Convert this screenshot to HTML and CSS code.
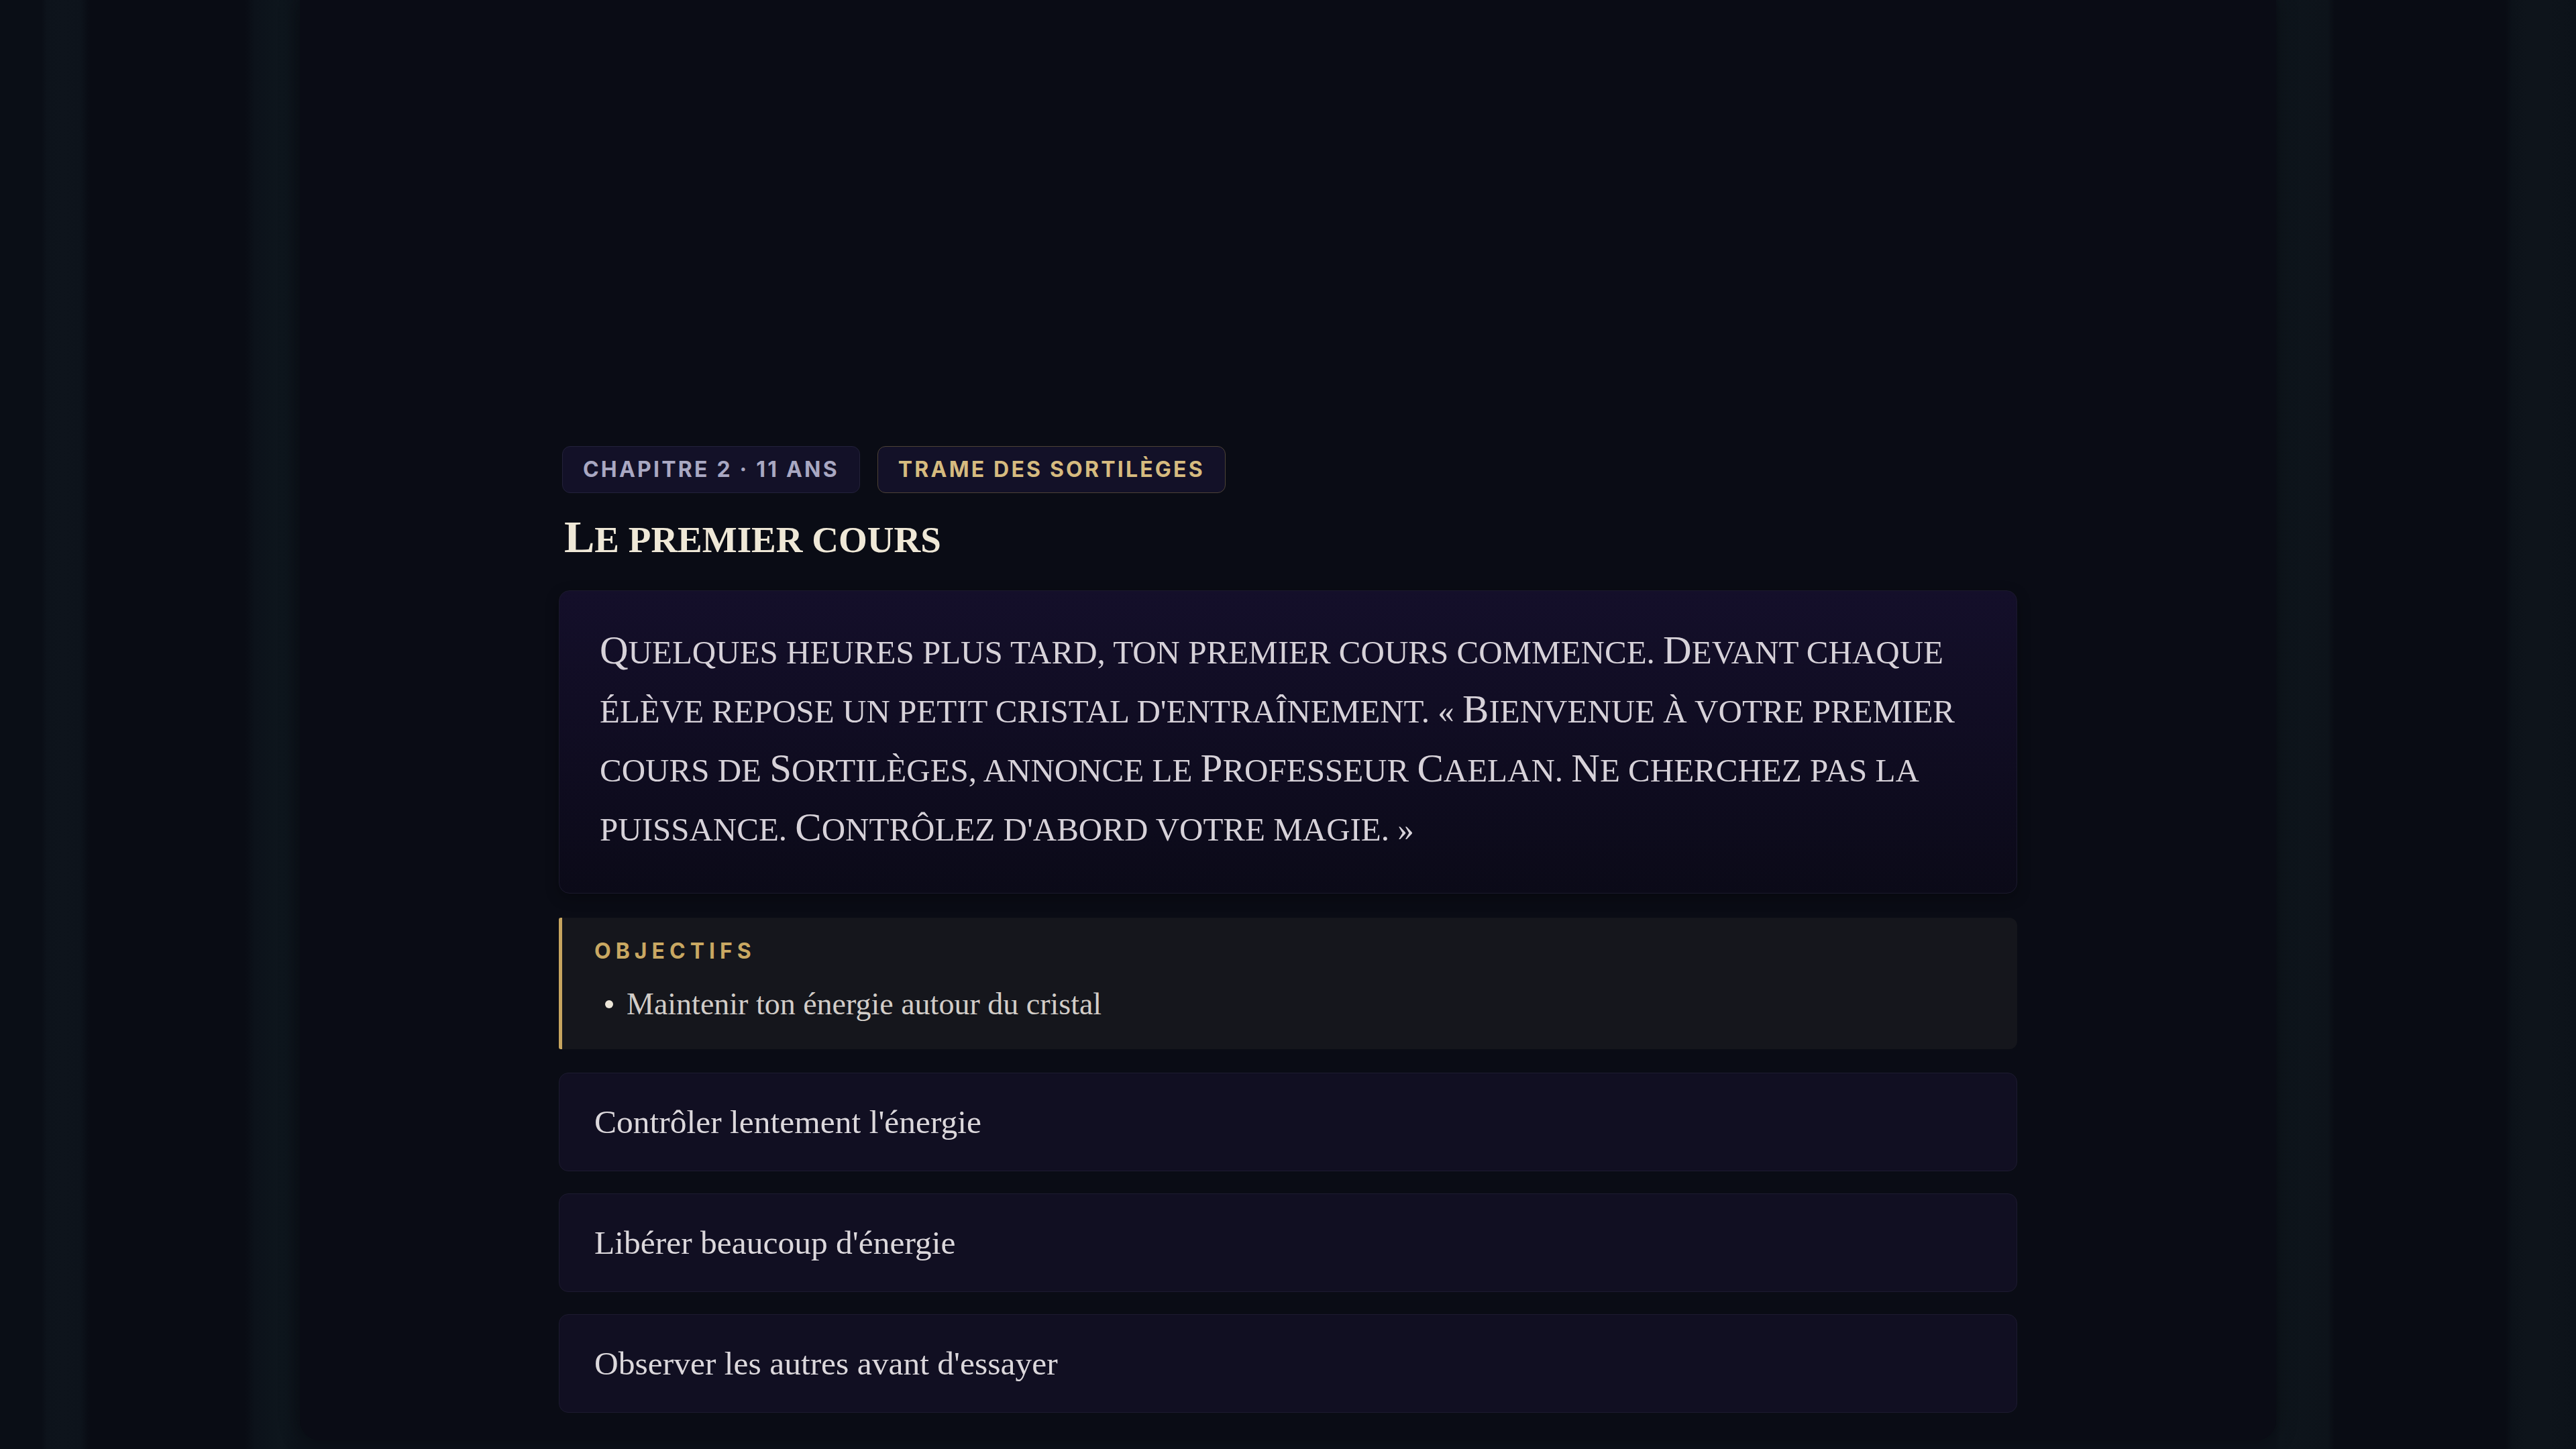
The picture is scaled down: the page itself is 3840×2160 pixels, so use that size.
FILE: index.html
```html
<!DOCTYPE html>
<html lang="fr">
<head>
<meta charset="utf-8">
<title>Le premier cours</title>
<link rel="stylesheet" href="styles.css">
</head>
<body>
<div class="panel">
  <main class="column">
    <div class="tags">
      <span class="tag tag-muted">Chapitre 2 · 11 ans</span>
      <span class="tag tag-gold">Trame des sortilèges</span>
    </div>
    <h1 class="title"><span class="cap">L</span>e premier cours</h1>
    <section class="story">
      <p class="story-text"><span class="cap">Q</span>uelques heures plus tard, ton premier cours commence. <span class="cap">D</span>evant chaque élève repose un petit cristal d'entraînement. « <span class="cap">B</span>ienvenue à votre premier cours de <span class="cap">S</span>ortilèges, annonce le <span class="cap">P</span>rofesseur <span class="cap">C</span>aelan. <span class="cap">N</span>e cherchez pas la puissance. <span class="cap">C</span>ontrôlez d'abord votre magie. »</p>
    </section>
    <section class="goals">
      <h2 class="goals-label">Objectifs</h2>
      <ul class="goals-list">
        <li>Maintenir ton énergie autour du cristal</li>
      </ul>
    </section>
    <div class="choices">
      <button class="choice">Contrôler lentement l'énergie</button>
      <button class="choice">Libérer beaucoup d'énergie</button>
      <button class="choice">Observer les autres avant d'essayer</button>
    </div>
  </main>
</div>
</body>
</html>
```
FILE: styles.css
```css
html, body {
  margin: 0;
  padding: 0;
}
body {
  width: 3840px;
  height: 2160px;
  overflow: hidden;
  background: linear-gradient(90deg,
    #0a0e16 0px, #0a0e16 62px,
    #0d131b 70px, #0e141c 95px, #0d131b 120px, #090c14 132px,
    #090c14 365px, #0c121a 380px, #0e161d 420px, #0c121a 446px,
    #0c121a 3392px, #0e151c 3400px, #0d131a 3470px, #090c14 3480px,
    #090c14 3735px, #0c1219 3745px, #0e141b 3765px, #0e141b 3800px, #0c1219 3840px);
  font-family: "Liberation Serif", "DejaVu Serif", serif;
}
.panel {
  width: 2946px;
  height: 2147px;
  box-sizing: border-box;
  margin: 0 auto;
  padding-top: 665px;
  background: #0a0c15;
  border-radius: 0 0 30px 30px;
  box-shadow: 0 0 30px rgba(0, 0, 0, 0.35);
}
.column {
  width: 2174px;
  margin: 0 auto;
  display: flex;
  flex-direction: column;
}
.tags {
  display: flex;
  gap: 26px;
  padding-left: 5px;
}
.tag {
  display: inline-block;
  height: 70px;
  box-sizing: border-box;
  line-height: 68px;
  padding: 0 30px;
  border-radius: 12px;
  font-family: "Inter", "Liberation Sans", sans-serif;
  font-weight: 700;
  font-size: 32px;
  letter-spacing: 3.2px;
  text-transform: uppercase;
  background: #131128;
}
.tag-muted {
  border: 1px solid #23213a;
  color: #a9a8c2;
}
.tag-gold {
  border: 1px solid #4d4236;
  color: #d6bb7f;
}
.title {
  margin: 34px 0 0 8px;
  font-size: 55px;
  line-height: 72px;
  font-weight: 700;
  text-transform: uppercase;
  color: #efe8d7;
  letter-spacing: 0;
}
.title .cap {
  font-size: 68px;
  line-height: 0.9;
}
.story {
  margin-top: 39px;
  border: 1px solid #1b192d;
  border-radius: 16px;
  background: linear-gradient(180deg, #140f2a 0%, #0f0c20 60%, #0b0a18 100%);
  padding: 48px 60px 50px;
  box-shadow: 0 6px 20px rgba(0, 0, 0, 0.3);
}
.story-text {
  margin: 0;
  font-size: 49px;
  line-height: 88px;
  text-transform: uppercase;
  color: #d7d2d9;
}
.story-text .cap {
  font-size: 59px;
  line-height: 1;
}
.goals {
  margin-top: 36px;
  background: #15161c;
  border-left: 5px solid #c7a55f;
  border-radius: 3px 12px 12px 3px;
  padding: 28px 40px 36px 48px;
}
.goals-label {
  margin: 0;
  font-family: "Inter", "Liberation Sans", sans-serif;
  font-weight: 700;
  font-size: 32px;
  line-height: 43px;
  letter-spacing: 7px;
  text-transform: uppercase;
  color: #c9a862;
}
.goals-list {
  list-style: none;
  margin: 26px 0 0;
  padding: 0 0 0 16px;
}
.goals-list li {
  display: flex;
  align-items: center;
  gap: 20px;
  font-size: 46px;
  line-height: 63px;
  color: #d2cdc8;
}
.goals-list li::before {
  content: "";
  width: 12px;
  height: 12px;
  border-radius: 50%;
  background: #ece5d8;
  flex: none;
}
.choices {
  margin-top: 35px;
  display: flex;
  flex-direction: column;
  gap: 33px;
}
.choice {
  display: block;
  width: 100%;
  text-align: left;
  height: 147px;
  box-sizing: border-box;
  padding: 0 52px;
  border: 1px solid #1d1b30;
  border-radius: 14px;
  background: #110f22;
  font-family: "Liberation Serif", "DejaVu Serif", serif;
  font-size: 49.5px;
  line-height: 60px;
  color: #dcd8dc;
  cursor: pointer;
}
```
